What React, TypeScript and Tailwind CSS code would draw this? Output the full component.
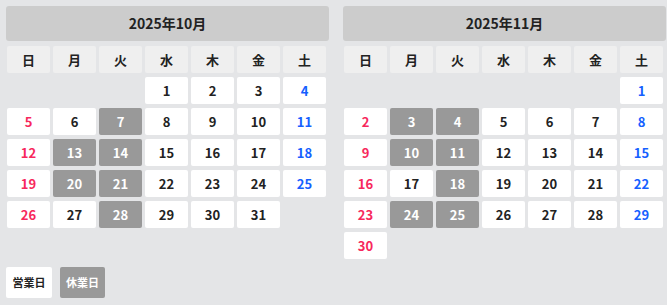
import React from 'react';

const WEEKDAYS = ['日', '月', '火', '水', '木', '金', '土'];

type Month = {
  title: string;
  firstDow: number;
  days: number;
  closed: number[];
};

const MONTHS: Month[] = [
  { title: '2025年10月', firstDow: 3, days: 31, closed: [7, 13, 14, 20, 21, 28] },
  { title: '2025年11月', firstDow: 6, days: 30, closed: [3, 4, 10, 11, 18, 24, 25] },
];

function Calendar({ month }: { month: Month }) {
  const cells: (number | null)[] = [];
  for (let i = 0; i < month.firstDow; i++) cells.push(null);
  for (let d = 1; d <= month.days; d++) cells.push(d);

  return (
    <div className="w-[323px]">
      <div className="h-[35px] rounded-[3px] bg-[#cccccc] flex items-center justify-center text-[14px] font-bold text-[#222]">
        {month.title}
      </div>
      <div className="mt-[5px] ml-px w-[319px] grid grid-cols-7 gap-x-[3px] gap-y-[4px]">
        {WEEKDAYS.map((w) => (
          <div key={w} className="h-[27px] rounded-[2px] bg-[#efefef] flex items-center justify-center text-[13px] font-bold text-[#222]">
            {w}
          </div>
        ))}
        {cells.map((d, i) => {
          if (d === null) return <div key={'e' + i} className="h-[27px]" />;
          const dow = i % 7;
          const closed = month.closed.includes(d);
          let cls = 'bg-white text-[#222]';
          if (closed) cls = 'bg-[#999999] text-white';
          else if (dow === 0) cls = 'bg-white text-[#f7285c]';
          else if (dow === 6) cls = 'bg-white text-[#1560ff]';
          return (
            <div key={d} className={`h-[27px] rounded-[2px] flex items-center justify-center text-[13px] font-bold ${cls}`}>
              {d}
            </div>
          );
        })}
      </div>
    </div>
  );
}

export default function App() {
  return (
    <div className="min-h-screen bg-[#e4e5e7] pt-[6px] pl-[6px] font-['Noto_Sans_CJK_JP','Noto_Sans',sans-serif]">
      <div className="flex gap-[14px]">
        {MONTHS.map((m) => (
          <Calendar key={m.title} month={m} />
        ))}
      </div>

      {/* Legend */}
      <div className="mt-[8px] flex gap-[8px]">
        <div className="w-[46px] h-[31px] rounded-[2px] bg-white flex items-center justify-center text-[11px] font-bold text-[#222]">
          営業日
        </div>
        <div className="w-[45px] h-[31px] rounded-[2px] bg-[#999999] flex items-center justify-center text-[11px] font-bold text-white">
          休業日
        </div>
      </div>
    </div>
  );
}
